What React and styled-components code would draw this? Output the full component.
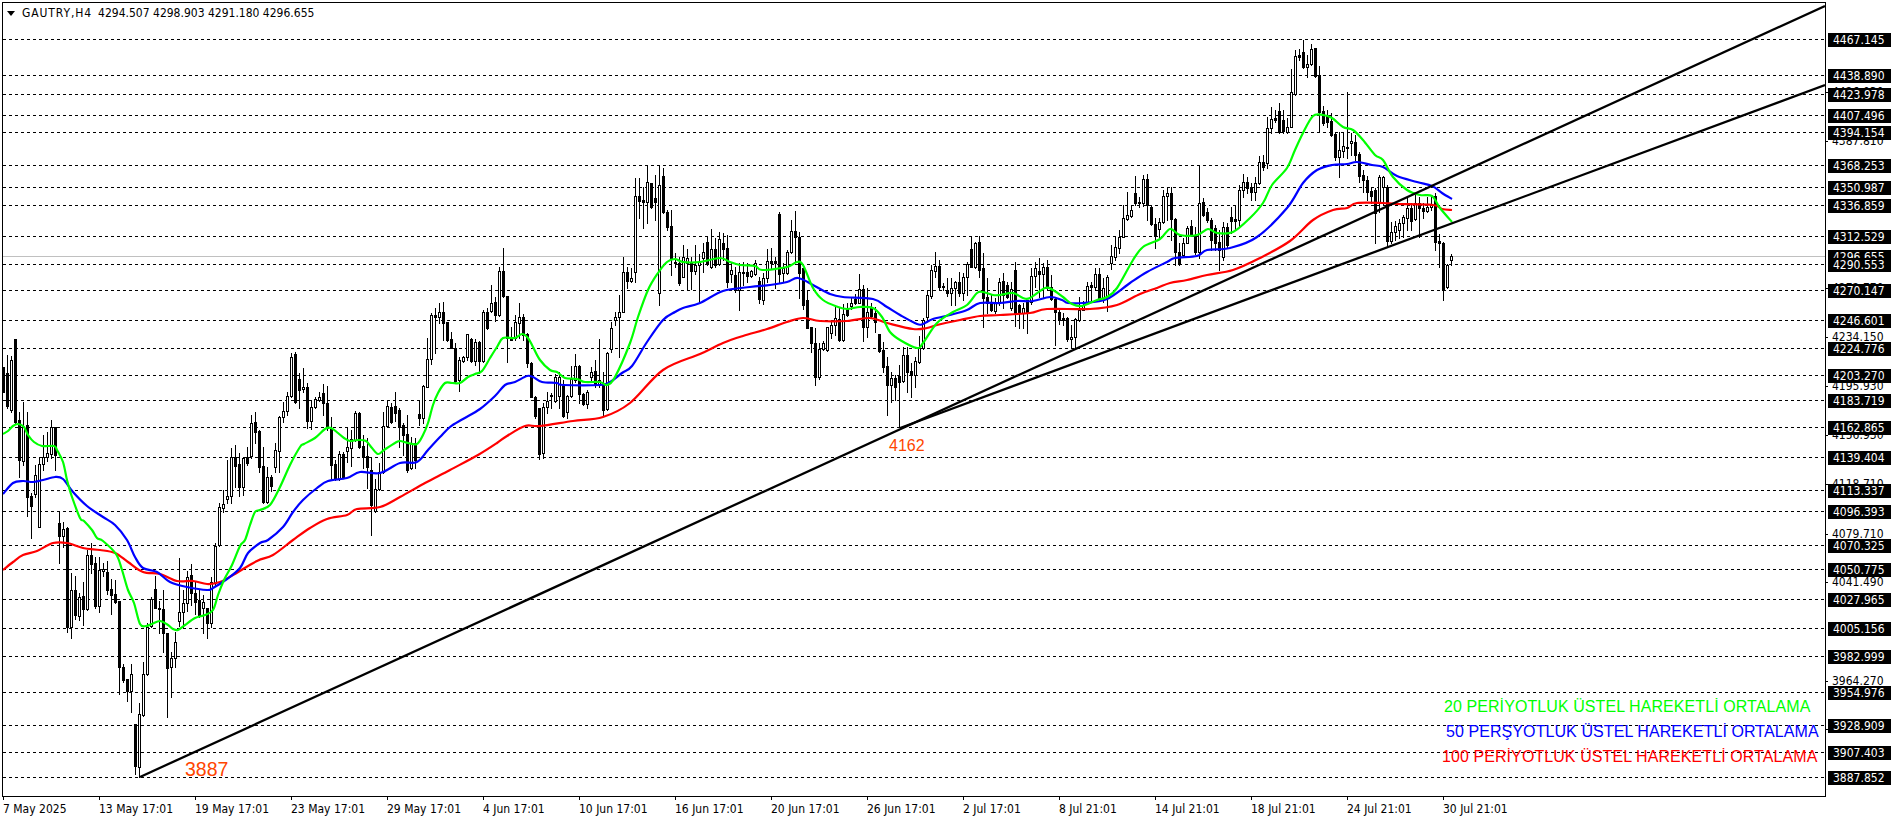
import React from "react";
import styled, { createGlobalStyle } from "styled-components";

const Global = createGlobalStyle`
  html, body { margin: 0; padding: 0; background: #fff; }
  body { font-family: "DejaVu Sans Condensed", "DejaVu Sans", sans-serif; overflow: hidden; }
`;

const AXIS_FONT = `"DejaVu Sans Condensed", "DejaVu Sans", sans-serif`;
const ARIAL = `"Liberation Sans", Arial, sans-serif`;

const Page = styled.div`
  width: 1896px; height: 820px; box-sizing: border-box; background: #fff;
  padding: 2px 0 0 2px;
  display: grid; grid-template-columns: 1824px 70px; grid-template-rows: 795px 23px;
`;
const Plot = styled.div`
  position: relative; box-sizing: border-box; width: 1824px; height: 795px;
  border: 1px solid #000;
`;
const ChartSvg = styled.svg`display: block;`;
const Title = styled.div`
  position: absolute; left: 4px; top: 2px; height: 16px;
  display: flex; align-items: center; gap: 7px;
  font: 12px/16px ${AXIS_FONT}; color: #000; white-space: pre;
`;
const TitleSymbol = styled.span`letter-spacing: 0.9px;`;
const TitleValues = styled.span`margin-left: -1px;`;
const Arrow = styled.span`
  width: 0; height: 0; border-left: 4px solid transparent; border-right: 4px solid transparent;
  border-top: 5px solid #000;
`;
const PriceAxis = styled.div`position: relative; width: 70px; height: 795px;`;
const PriceTick = styled.div`
  position: absolute; left: 0; width: 63px; height: 14px; padding-left: 6px; box-sizing: border-box;
  font: 12px/14px ${AXIS_FONT}; color: #000;
  &::before { content: ""; position: absolute; left: -1px; top: 7px; width: 3px; height: 1px; background: #000; }
`;
const PriceBox = styled.div`
  position: absolute; left: 2px; width: 63px; height: 14px; padding-left: 5px; box-sizing: border-box;
  background: #000; color: #fff; font: 12px/14px ${AXIS_FONT};
`;
const TimeAxis = styled.div`grid-column: 1 / 3; display: flex; padding-left: 1px;`;
const TimeLabel = styled.div`
  position: relative; flex: 0 0 96px; padding-top: 5px; white-space: nowrap;
  font: 12px/14px ${AXIS_FONT}; color: #000;
  &::before { content: ""; position: absolute; left: 0; top: -1px; width: 1px; height: 4px; background: #000; }
`;
const Note = styled.div`
  position: absolute; left: ${(p) => p.$x}px; top: ${(p) => p.$y}px;
  font: ${(p) => p.$size}px/1 ${ARIAL}; color: #ff4500; white-space: nowrap;
`;
const Legend = styled.div`
  position: absolute; left: 1436px; top: 694px; display: flex; flex-direction: column; gap: 6px;
`;
const LegendRow = styled.div`
  margin-left: ${(p) => p.$shift}px; height: 19px;
  font: 16px/19px ${ARIAL}; letter-spacing: 0.08px; color: ${(p) => p.$color}; white-space: nowrap;
`;

const RAW = `0 367 367 392 392 0
1 355 373 406 408 0
2 356 360 410 412 1
3 339 339 422 424 0
4 412 420 460 477 0
5 402 427 461 465 1
6 412 425 497 516 0
7 493 496 506 538 0
8 465 475 494 497 1
9 457 464 527 527 1
10 435 457 464 470 1
11 432 453 457 461 1
12 420 427 454 458 1
13 427 427 455 470 0
14 512 523 536 563 0
15 522 529 536 547 1
16 527 528 627 632 0
17 573 590 627 638 1
18 576 590 615 619 0
19 593 597 616 620 1
20 582 596 609 625 0
21 550 555 609 610 1
22 543 555 564 573 0
23 557 563 606 608 0
24 557 570 606 612 1
25 563 569 571 576 1
26 561 572 590 594 0
27 579 589 595 614 0
28 580 594 602 603 0
29 601 601 667 694 0
30 664 667 680 682 0
31 679 679 691 701 0
32 664 674 691 712 1
33 724 724 766 774 0
34 703 714 767 777 1
35 662 674 715 716 1
36 623 627 674 675 1
37 597 599 626 627 1
38 576 589 608 608 0
39 601 608 609 633 0
40 590 609 633 652 0
41 633 633 668 717 0
42 652 658 667 697 1
43 632 642 658 667 1
44 558 612 621 626 1
45 590 603 612 627 1
46 571 577 603 611 1
47 564 575 593 605 0
48 582 593 602 614 0
49 590 600 616 617 0
50 595 602 608 633 1
51 608 608 623 638 0
52 577 582 623 627 1
53 543 546 583 585 1
54 503 507 545 546 1
55 490 504 508 512 1
56 460 496 499 503 1
57 448 457 496 503 1
58 445 457 466 487 0
59 453 464 487 496 0
60 457 458 487 495 1
61 447 457 463 465 0
62 415 423 456 458 1
63 412 422 432 443 0
64 430 431 467 472 0
65 447 466 502 503 0
66 467 477 502 503 1
67 475 477 486 491 0
68 443 450 467 472 1
69 416 417 451 472 1
70 402 411 417 422 1
71 392 396 411 415 1
72 353 357 396 397 1
73 352 354 402 403 0
74 373 379 390 408 0
75 368 387 389 392 1
76 383 387 421 428 0
77 400 407 421 429 1
78 397 399 407 408 1
79 392 397 400 401 1
80 384 393 403 415 0
81 386 403 428 430 0
82 417 429 465 480 0
83 460 464 479 480 0
84 451 454 479 480 1
85 452 454 477 478 0
86 427 447 451 462 1
87 430 439 448 466 1
88 411 413 440 441 1
89 412 413 447 448 0
90 435 446 457 468 0
91 438 456 467 488 0
92 457 470 505 535 0
93 479 489 511 512 1
94 463 472 489 490 1
95 412 426 472 473 1
96 401 406 426 427 1
97 403 407 422 423 0
98 392 406 413 421 0
99 408 410 427 447 0
100 423 425 435 455 0
101 415 434 470 472 0
102 437 443 468 469 1
103 438 443 460 468 0
104 400 414 418 425 0
105 385 386 418 423 1
106 338 359 387 387 1
107 313 315 359 364 1
108 308 315 317 353 0
109 303 312 317 323 1
110 302 312 323 340 0
111 322 322 340 341 0
112 332 339 348 348 0
113 343 348 381 382 0
114 357 360 380 391 1
115 356 357 361 362 1
116 334 334 357 360 1
117 338 339 361 362 0
118 339 342 361 365 1
119 341 342 361 373 0
120 310 312 361 362 1
121 308 312 328 329 0
122 285 303 311 312 1
123 297 302 315 321 0
124 267 271 315 316 1
125 248 271 296 297 0
126 297 296 338 362 0
127 327 338 340 340 0
128 315 322 338 340 1
129 303 317 323 338 1
130 314 317 335 340 0
131 333 334 363 367 0
132 362 363 397 397 0
133 396 397 416 418 0
134 408 408 454 459 0
135 403 407 453 458 1
136 392 401 407 413 1
137 393 395 396 408 1
138 374 377 401 402 1
139 372 377 396 408 1
140 380 386 416 417 0
141 395 396 412 418 1
142 366 379 396 397 1
143 354 366 380 382 1
144 365 366 394 403 0
145 393 394 404 405 0
146 390 392 404 408 1
147 367 372 377 382 1
148 360 371 385 387 0
149 339 380 385 387 1
150 372 385 410 416 0
151 352 353 409 410 1
152 322 328 349 352 1
153 312 317 320 325 1
154 295 312 317 357 1
155 257 272 312 312 1
156 267 272 281 288 0
157 268 278 281 282 1
158 178 196 272 282 1
159 178 196 201 218 0
160 187 200 202 228 0
161 165 182 202 223 1
162 183 183 207 208 0
163 175 198 202 220 0
164 165 185 293 305 1
165 168 176 212 213 0
166 210 212 227 230 0
167 210 226 258 275 0
168 253 262 263 267 0
169 257 263 283 285 0
170 245 257 277 277 1
171 249 258 263 289 1
172 257 262 271 289 0
173 245 265 271 274 1
174 254 262 265 303 1
175 243 252 258 272 1
176 237 242 264 265 0
177 229 249 267 268 1
178 238 249 265 267 0
179 232 239 264 265 1
180 233 243 249 260 0
181 235 248 282 287 0
182 263 270 274 282 1
183 267 275 290 292 0
184 263 272 290 310 1
185 262 272 273 285 1
186 263 272 276 282 0
187 270 271 276 277 1
188 260 263 274 275 1
189 277 281 299 303 0
190 273 278 300 304 1
191 249 261 278 282 1
192 248 261 263 268 0
193 257 261 263 288 0
194 212 214 274 282 0
195 263 268 273 282 1
196 250 252 273 274 1
197 220 231 252 253 1
198 211 231 237 262 0
199 232 237 273 298 0
200 268 268 305 309 0
201 290 300 328 328 0
202 327 327 343 352 0
203 328 343 377 385 0
204 343 349 377 379 1
205 341 343 349 350 1
206 327 327 350 351 1
207 320 325 333 338 1
208 307 318 325 335 1
209 307 319 340 341 0
210 304 314 340 341 1
211 303 309 315 316 0
212 298 303 306 309 1
213 294 299 303 304 0
214 274 289 303 303 1
215 285 289 327 341 0
216 288 312 327 337 1
217 303 308 316 317 0
218 307 313 322 332 0
219 334 334 351 352 0
220 342 350 367 372 0
221 357 366 385 415 0
222 372 378 385 402 1
223 375 378 387 400 0
224 365 376 382 427 0
225 347 355 381 382 1
226 347 355 372 392 0
227 363 371 375 397 0
228 357 361 375 387 1
229 336 348 362 363 1
230 318 320 348 349 1
231 290 295 317 320 1
232 265 270 296 298 1
233 252 266 271 277 1
234 260 266 287 290 0
235 283 286 287 290 0
236 278 290 293 296 0
237 278 288 293 305 1
238 281 282 288 305 1
239 272 282 293 296 0
240 273 277 293 300 1
241 262 264 277 295 1
242 237 249 267 267 0
243 242 243 267 268 1
244 236 242 270 277 0
245 253 268 298 327 0
246 278 297 303 313 0
247 295 302 310 311 0
248 298 303 311 313 1
249 278 282 303 305 1
250 273 281 295 308 0
251 282 285 297 298 0
252 282 289 308 310 1
253 262 270 313 326 0
254 304 305 313 328 0
255 303 308 313 328 1
256 300 300 313 333 0
257 268 276 302 304 1
258 262 268 276 287 1
259 258 271 274 297 0
260 263 267 274 297 1
261 260 267 288 290 0
262 275 287 299 300 0
263 298 299 312 345 0
264 308 312 320 324 0
265 313 318 320 325 0
266 317 318 339 341 0
267 325 337 339 348 1
268 318 319 337 349 1
269 297 310 320 321 1
270 301 305 310 310 1
271 282 286 302 303 1
272 282 285 287 300 0
273 268 274 287 289 1
274 268 274 298 300 0
275 278 288 298 302 1
276 275 277 298 311 1
277 245 256 263 269 1
278 236 247 257 260 1
279 230 237 248 253 1
280 205 218 237 237 1
281 192 215 219 220 1
282 205 210 216 217 1
283 176 193 203 205 0
284 197 202 203 207 0
285 175 179 203 206 1
286 174 179 205 220 0
287 205 207 224 225 0
288 218 224 236 248 0
289 218 222 229 238 1
290 190 196 222 223 1
291 187 193 196 220 1
292 187 193 219 240 0
293 218 219 252 265 0
294 243 252 264 265 0
295 238 243 255 256 1
296 226 228 243 243 1
297 220 226 235 236 0
298 227 235 252 254 0
299 165 203 252 258 1
300 198 202 215 216 0
301 208 212 220 222 0
302 218 220 240 250 0
303 225 228 243 250 0
304 230 242 250 270 0
305 222 227 257 260 1
306 223 227 245 247 0
307 207 217 221 233 0
308 205 219 221 230 0
309 185 190 220 227 1
310 174 182 190 197 1
311 177 182 188 193 0
312 183 187 192 200 0
313 177 183 192 200 1
314 156 162 183 184 1
315 155 162 167 170 0
316 117 128 163 168 1
317 107 119 128 133 1
318 110 118 120 122 0
319 103 111 132 133 0
320 110 120 131 133 0
321 118 127 132 133 1
322 69 92 127 127 1
323 50 56 94 95 1
324 49 55 57 60 0
325 40 52 67 68 0
326 55 64 67 77 1
327 44 49 64 65 1
328 48 48 76 77 0
329 66 75 112 131 0
330 106 111 123 125 0
331 110 115 122 127 0
332 113 121 135 136 0
333 133 134 157 160 0
334 132 150 157 177 1
335 133 146 151 157 1
336 92 147 148 158 0
337 133 141 143 155 1
338 135 142 155 160 0
339 152 154 176 182 0
340 170 175 180 192 0
341 176 180 192 200 0
342 187 191 196 203 0
343 188 190 213 243 0
344 175 177 203 212 1
345 176 177 187 205 1
346 185 187 241 246 0
347 222 232 241 243 1
348 221 226 232 240 1
349 219 223 230 238 1
350 215 217 223 237 1
351 198 208 218 230 1
352 203 208 221 230 0
353 193 203 219 220 1
354 197 203 208 237 0
355 203 208 211 218 0
356 197 207 211 212 1
357 197 205 207 210 1
358 193 196 242 250 0
359 234 241 243 267 0
360 242 243 290 300 0
361 264 265 287 288 1
362 254 256 260 265 1`;

const candles = RAW.split("\n").map((l) => {
  const [i, h, t, b, lo, k] = l.trim().split(" ").map(Number);
  return { x: 3 + 4 * i, h, t, b, lo, bull: k === 1 };
});
const blackPath = candles
  .map((c) => `M${c.x} ${c.h}V${c.lo + 1}h1V${c.h}zM${c.x - 1} ${c.t}V${c.b + 1}h3V${c.t}z`)
  .join("");
const whitePath = candles
  .filter((c) => c.bull && c.b - c.t >= 2)
  .map((c) => `M${c.x} ${c.t + 1}V${c.b}h1V${c.t + 1}z`)
  .join("");

const smooth = (s) => {
  const p = s.split(" ").map((q) => q.split(",").map(Number));
  let d = `M${p[0][0]} ${p[0][1]}`;
  for (let i = 0; i < p.length - 1; i++) {
    const a = p[Math.max(0, i - 1)], b = p[i], c = p[i + 1], e = p[Math.min(p.length - 1, i + 2)];
    const f = (n) => n.toFixed(1);
    d += `C${f(b[0] + (c[0] - a[0]) / 6)} ${f(b[1] + (c[1] - a[1]) / 6)} ${f(c[0] - (e[0] - b[0]) / 6)} ${f(c[1] - (e[1] - b[1]) / 6)} ${c[0]} ${c[1]}`;
  }
  return d;
};

const GREEN = "3,434 8,431 13,426 18,424 24,427 28,435 34,442 42,446 54,446 57,450 63,462 67,480 72,497 80,518 84,521 92,530 97,538 103,541 116,554 122,570 128,590 134,603 140,624 146,626 152,624 160,621 168,625 173,629 178,630 185,625 195,618 205,615 213,610 218,595 224,580 232,565 240,546 245,540 250,525 255,512 260,510 270,505 280,487 290,465 300,447 304,444 315,438 325,429 331,428 338,433 344,438 350,441 358,440 366,441 372,448 378,454 384,450 395,443 400,441 408,443 417,444 423,435 428,423 433,405 438,393 445,383 452,383 460,383 468,377 475,374 482,371 490,358 497,347 503,338 515,338 522,334 528,338 533,347 540,360 550,370 557,372 565,378 577,379 585,382 600,382 607,385 615,377 630,343 638,317 648,290 658,273 667,262 675,259 683,262 700,262 720,258 730,262 740,265 755,266 762,270 787,267 797,262 803,265 813,288 823,300 838,307 847,309 860,307 873,308 882,317 890,332 900,340 917,348 923,343 937,323 953,312 967,305 977,293 983,292 993,295 1000,295 1013,293 1023,298 1030,298 1045,288 1053,290 1063,297 1072,304 1082,306 1097,300 1107,297 1117,288 1133,260 1143,247 1160,239 1170,229 1180,235 1197,235 1208,229 1217,233 1233,232 1250,218 1263,203 1272,185 1287,168 1295,150 1303,133 1313,116 1323,115 1332,118 1343,127 1353,130 1363,140 1375,155 1383,160 1393,177 1407,190 1420,195 1432,196 1440,208 1452,222";
const BLUE = "3,494 13,483 23,481 33,482 43,480 55,477 63,479 73,492 87,506 103,517 115,525 127,540 135,557 143,568 157,572 170,582 187,587 207,590 213,588 227,579 240,568 248,553 260,543 268,540 283,527 293,512 303,500 317,488 328,481 347,478 360,472 380,473 400,463 417,462 428,450 440,437 450,427 463,419 480,409 495,396 505,385 515,382 527,376 533,377 542,382 557,383 563,385 600,385 610,382 622,373 632,366 647,342 663,320 675,312 683,308 700,303 723,291 750,287 770,285 787,282 798,278 813,285 830,294 843,297 873,299 887,307 900,315 917,324 923,324 933,319 950,315 967,310 980,303 1000,303 1017,301 1033,301 1050,297 1062,300 1068,303 1083,303 1107,299 1130,283 1147,272 1167,262 1175,258 1197,256 1207,250 1230,248 1257,237 1287,208 1303,183 1317,170 1332,165 1347,164 1357,162 1372,165 1383,167 1397,176 1417,182 1432,186 1442,193 1452,199";
const RED = "3,570 13,562 23,555 37,551 53,543 67,543 83,548 100,550 115,553 128,562 143,572 160,574 177,581 193,581 207,584 220,582 233,575 257,561 273,555 293,540 310,528 327,519 347,515 357,509 380,507 400,497 425,483 450,470 478,455 497,443 507,436 525,426 540,426 573,421 603,417 630,403 663,370 700,354 723,343 743,336 767,329 787,322 803,318 820,321 847,321 870,318 887,323 913,329 927,328 937,325 960,320 980,316 1000,315 1030,313 1047,309 1090,309 1117,305 1140,294 1157,288 1170,283 1187,280 1207,275 1233,270 1260,258 1290,241 1313,220 1333,210 1347,208 1357,203 1383,203 1397,204 1433,205 1442,209 1452,210";

const yOf = (p) => Math.round(39 + (4467.145 - p) * 1.274);
const LEVELS = ["4467.145","4438.890","4423.978","4407.496","4394.154","4368.253","4350.987","4336.859","4312.529","4296.655","4290.553","4270.147","4246.601","4224.776","4203.270","4183.719","4162.865","4139.404","4113.337","4096.393","4070.325","4050.775","4027.965","4005.156","3982.999","3954.976","3928.909","3907.403","3887.852"];
const TICKS = ["4426.030","4387.810","4272.770","4234.150","4195.930","4156.930","4118.710","4079.710","4041.490","3964.270","3926.050"];
const TIMES = ["7 May 2025","13 May 17:01","19 May 17:01","23 May 17:01","29 May 17:01","4 Jun 17:01","10 Jun 17:01","16 Jun 17:01","20 Jun 17:01","26 Jun 17:01","2 Jul 17:01","8 Jul 21:01","14 Jul 21:01","18 Jul 21:01","24 Jul 21:01","30 Jul 21:01"];

function Chart() {
  return (
    <ChartSvg width="1822" height="793" viewBox="3 3 1822 793" shapeRendering="crispEdges">
      {LEVELS.filter((p) => p !== "4296.655").map((p) => (
        <line key={p} x1="3" x2="1825" y1={yOf(+p) + 0.5} y2={yOf(+p) + 0.5} stroke="#000" strokeDasharray="3 3" />
      ))}
      <line x1="3" x2="1825" y1="256.5" y2="256.5" stroke="#c0c0c0" />
      <path d={blackPath} fill="#000" />
      <path d={whitePath} fill="#fff" />
      <path d={smooth(RED)} fill="none" stroke="#ff0000" strokeWidth="2.2" shapeRendering="auto" />
      <path d={smooth(BLUE)} fill="none" stroke="#0000ff" strokeWidth="2.2" shapeRendering="auto" />
      <path d={smooth(GREEN)} fill="none" stroke="#00ff00" strokeWidth="2.2" shapeRendering="auto" />
      <line x1="140" y1="777" x2="1825" y2="6" stroke="#000" strokeWidth="2.3" shapeRendering="auto" />
      <line x1="900" y1="428" x2="1825" y2="85" stroke="#000" strokeWidth="2.3" shapeRendering="auto" />
    </ChartSvg>
  );
}

export default function App() {
  return (
    <Page>
      <Global />
      <Plot>
        <Chart />
        <Title>
          <Arrow />
          <TitleSymbol>GAUTRY,H4</TitleSymbol>
          <TitleValues>4294.507 4298.903 4291.180 4296.655</TitleValues>
        </Title>
        <Note $x={182} $y={757} $size={19.5}>3887</Note>
        <Note $x={886} $y={435} $size={16}>4162</Note>
        <Legend>
          <LegendRow $shift={5} $color="#00ff00">20 PERİYOTLUK ÜSTEL HAREKETLİ ORTALAMA</LegendRow>
          <LegendRow $shift={7} $color="#0000ff">50 PERŞYOTLUK ÜSTEL HAREKETLİ ORTALAMA</LegendRow>
          <LegendRow $shift={3} $color="#ff0000">100 PERİYOTLUK ÜSTEL HAREKETLİ ORTALAMA</LegendRow>
        </Legend>
      </Plot>
      <PriceAxis>
        {TICKS.map((p) => (
          <PriceTick key={p} style={{ top: yOf(+p) - 8 }}>{p}</PriceTick>
        ))}
        {LEVELS.map((p) => (
          <PriceBox key={p} style={{ top: yOf(+p) - 8 }}>{p}</PriceBox>
        ))}
      </PriceAxis>
      <TimeAxis>
        {TIMES.map((t) => <TimeLabel key={t}>{t}</TimeLabel>)}
      </TimeAxis>
    </Page>
  );
}
